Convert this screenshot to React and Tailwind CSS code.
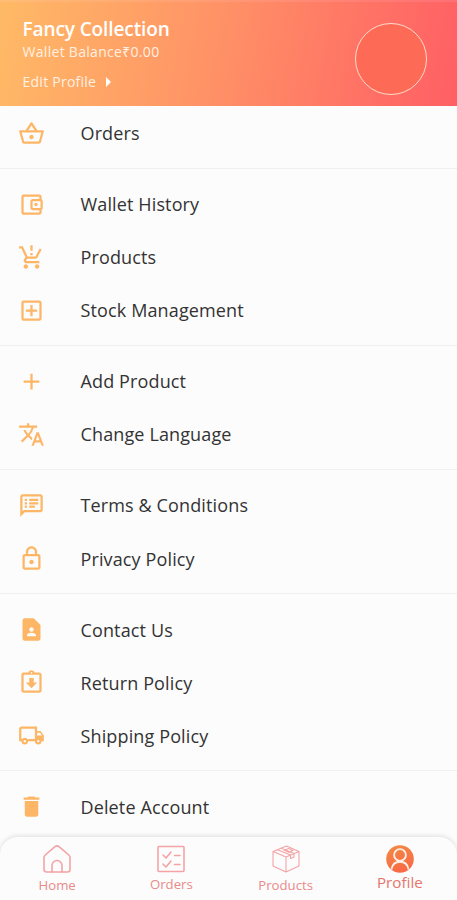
import React from 'react';
import {
  MdAdd,
  MdContactPage,
  MdDelete,
  MdOutlineAccountBalanceWallet,
  MdOutlineAddBox,
  MdOutlineAssignmentReturned,
  MdOutlineLocalShipping,
  MdOutlineLock,
  MdOutlineProductionQuantityLimits,
  MdOutlineShoppingBasket,
  MdOutlineSpeakerNotes,
  MdTranslate,
} from 'react-icons/md';

const sections = [
  [{ label: 'Orders', icon: MdOutlineShoppingBasket }],
  [
    { label: 'Wallet History', icon: MdOutlineAccountBalanceWallet },
    { label: 'Products', icon: MdOutlineProductionQuantityLimits },
    { label: 'Stock Management', icon: MdOutlineAddBox },
  ],
  [
    { label: 'Add Product', icon: MdAdd },
    { label: 'Change Language', icon: MdTranslate },
  ],
  [
    { label: 'Terms & Conditions', icon: MdOutlineSpeakerNotes },
    { label: 'Privacy Policy', icon: MdOutlineLock },
  ],
  [
    { label: 'Contact Us', icon: MdContactPage },
    { label: 'Return Policy', icon: MdOutlineAssignmentReturned },
    { label: 'Shipping Policy', icon: MdOutlineLocalShipping },
  ],
  [{ label: 'Delete Account', icon: MdDelete }],
];

function HomeIcon() {
  return (
    <svg className="w-7 h-7" viewBox="0 0 28 28" fill="none" stroke="#f4a3a5" strokeWidth="1.6" strokeLinejoin="round" strokeLinecap="round">
      <path d="M1 12.5c0-1 .4-1.8 1.2-2.5L12 1.7c1.2-1 2.8-1 4 0L25.800 10c.8.7 1.2 1.5 1.2 2.5V24.500c0 1.4-1 2.5-2.5 2.5h-21C2 27 1 25.900 1 24.500z" />
      <path d="M9 27v-6.5a5 5 0 0 1 10 0V27" />
    </svg>
  );
}

function OrdersIcon() {
  return (
    <svg className="w-7 h-7" viewBox="0 0 28 28" fill="none" stroke="#f4a3a5" strokeWidth="1.6" strokeLinejoin="round" strokeLinecap="round">
      <rect x="1" y="1.5" width="26" height="25" rx="1" />
      <path d="M6 10l3 3 5-6M6 19l3 3 5-6M17.5 10.5H23M17.5 19.5H23" />
    </svg>
  );
}

function ProductsIcon() {
  return (
    <svg className="w-7 h-7" viewBox="0 0 28 28" fill="none" stroke="#f4a3a5" strokeWidth="1.1" strokeLinejoin="round" strokeLinecap="round">
      <path d="M1 6.5L14.5 1 27 6.5V21L14 27 1 21zM1 6.5L14 12l13-5.5M14 12v15" />
      <path d="M5.5 4.7L18.5 10v3.5l3.5-1.5V8.600L9.200 3.200M12 5l5-1.5 4 2-4.500 1.700z" />
    </svg>
  );
}

function ProfileIcon() {
  return (
    <svg className="w-7 h-7" viewBox="0 0 28 28" fill="none">
      <defs>
        <linearGradient id="profileFill" x1="0" y1="0" x2="0.3" y2="1">
          <stop offset="0" stopColor="#f28b45" />
          <stop offset="1" stopColor="#f96a45" />
        </linearGradient>
      </defs>
      <circle cx="14" cy="14" r="13.8" fill="url(#profileFill)" />
      <circle cx="14" cy="10" r="5.9" stroke="#fff1e8" strokeWidth="1.9" />
      <path d="M5.5 24.300c.8-5 4-7.600 8.500-7.600s7.700 2.600 8.500 7.600" stroke="#fff1e8" strokeWidth="1.9" />
    </svg>
  );
}

const tabs = [
  { label: 'Home', icon: HomeIcon, text: 'text-[13.2px] text-[#e98a89]' },
  { label: 'Orders', icon: OrdersIcon, text: 'text-[13.2px] text-[#e98a89] -mt-px' },
  { label: 'Products', icon: ProductsIcon, text: 'text-[13.2px] text-[#e98a89]' },
  { label: 'Profile', icon: ProfileIcon, text: 'text-[15.2px] text-[#e5756b] -mt-[3px]' },
];

function MenuRow({ label, icon: Icon }) {
  return (
    <li className="flex h-[53.17px] items-center pl-[18px]">
      <Icon className="-mt-px h-[27px] w-[27px] shrink-0 text-[#fdb566]" />
      <span className="pl-[35.5px] text-[18px] tracking-[0.13px] text-[#333333]">{label}</span>
    </li>
  );
}

export default function App() {
  return (
    <div className="flex h-[900px] w-[457px] flex-col overflow-hidden bg-[#fcfcfc] font-['Open_Sans','Noto_Sans',sans-serif]">
      {/* Header */}
      <header className="flex h-[106px] shrink-0 items-start justify-between border-t-2 border-white/10 bg-linear-[100deg,#ffba66_0%,#ff8f66_50%,#ff7365_78%,#ff5f64_100%] pl-[22.5px] pr-[30px] text-white">
        <div className="pt-[15px]">
          <h1 className="text-[19px] leading-6 font-semibold tracking-[-0.1px]">Fancy Collection</h1>
          <p className="text-[14px] leading-[22px] tracking-[0.3px] text-[#fff0e2]">Wallet Balance₹0.00</p>
          <button className="mt-[9px] flex items-center gap-2.5 text-[14px] leading-5 tracking-[0.25px] text-[#fff0e2]">
            Edit Profile
            <svg className="h-2.5 w-1.5" viewBox="0 0 6 10" fill="white">
              <path d="M0 0l5 5-5 5z" />
            </svg>
          </button>
        </div>
        <div className="mt-[21px] h-[72px] w-[72px] rounded-full border border-[#ffdccb] bg-[#fd6b57]" />
      </header>

      {/* Menu */}
      <main className="min-h-0 flex-1 pt-px">
        {sections.map((items, i) => (
          <React.Fragment key={items[0].label}>
            {i > 0 && (
              <div className="h-[17.8px] pt-[7.5px]">
                <hr className="w-full border-[#f0f0f0]" />
              </div>
            )}
            <ul>
              {items.map((item) => (
                <MenuRow key={item.label} {...item} />
              ))}
            </ul>
          </React.Fragment>
        ))}
      </main>

      {/* Bottom tabs */}
      <nav className="z-10 grid h-[63px] shrink-0 grid-cols-4 rounded-t-[18px] bg-[#fcfcfc] pt-2 shadow-[0_-1px_5px_rgba(0,0,0,0.12)]">
        {tabs.map(({ label, icon: Icon, text }) => (
          <button key={label} className="flex flex-col items-center">
            <Icon />
            <span className={`leading-6 ${text}`}>{label}</span>
          </button>
        ))}
      </nav>
    </div>
  );
}
